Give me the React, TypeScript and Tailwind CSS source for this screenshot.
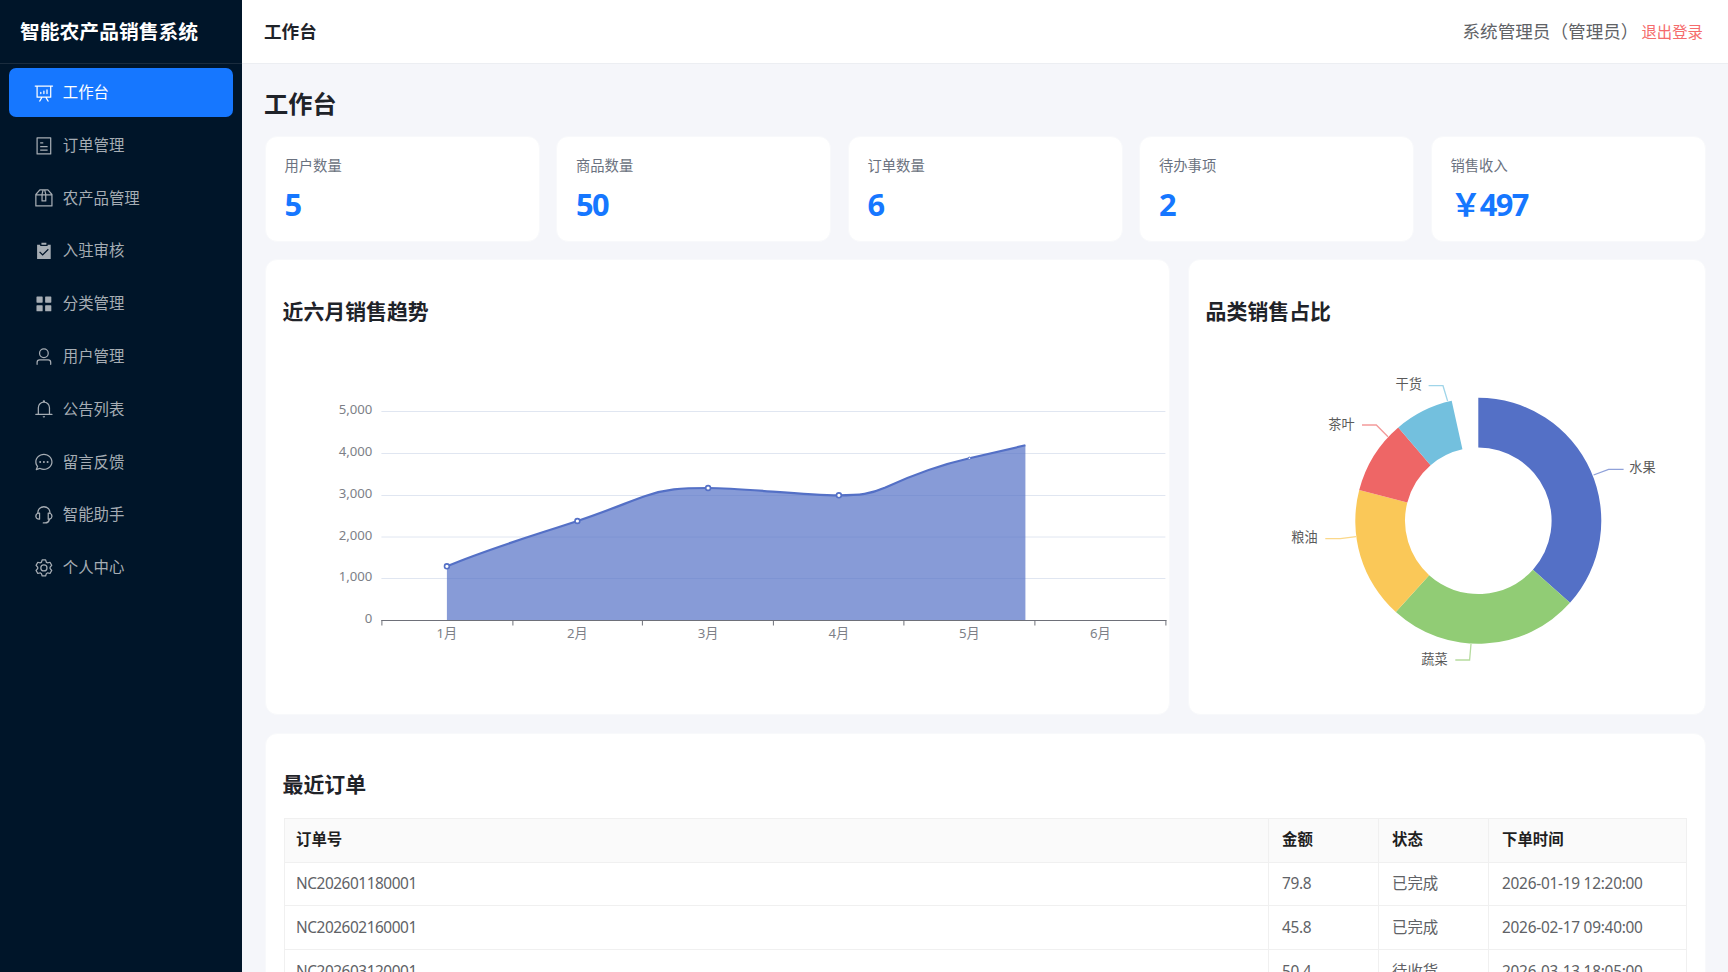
const icons: Record<string, string> = {
  board:
    "m665.216 768 110.848 192h-73.856L591.36 768H433.024L322.176 960H248.32l110.848-192H160a32 32 0 0 1-32-32V192H64a32 32 0 0 1 0-64h896a32 32 0 1 1 0 64h-64v544a32 32 0 0 1-32 32H665.216zM832 192H192v512h640V192zM352 448a32 32 0 0 1 32 32v64a32 32 0 0 1-64 0v-64a32 32 0 0 1 32-32zm160-64a32 32 0 0 1 32 32v128a32 32 0 0 1-64 0V416a32 32 0 0 1 32-32zm160-64a32 32 0 0 1 32 32v192a32 32 0 1 1-64 0V352a32 32 0 0 1 32-32z",
  tickets:
    "M192 128v768h640V128H192zm-32-64h704a32 32 0 0 1 32 32v832a32 32 0 0 1-32 32H160a32 32 0 0 1-32-32V96a32 32 0 0 1 32-32zm160 448h384v64H320v-64zm0-192h160v64H320v-64zm0 384h384v64H320v-64z",
  box: "M317.056 128 128 344.064V896h768V344.064L706.944 128H317.056zm-14.528-64h418.944a32 32 0 0 1 24.064 10.88l206.528 236.096A32 32 0 0 1 960 332.032V928a32 32 0 0 1-32 32H96a32 32 0 0 1-32-32V332.032a32 32 0 0 1 7.936-21.12L278.4 75.008A32 32 0 0 1 302.528 64zM64 320h896v64H64zM448 327.872V640h128V327.872L526.08 128h-28.16L448 327.872zM448 64h128l64 256v352a32 32 0 0 1-32 32H416a32 32 0 0 1-32-32V320l64-256z",
  checked:
    "M704 192h160v736H160V192h160.064v64H704v-64zM311.616 537.28l-45.312 45.248L447.36 763.52l316.8-316.8-45.248-45.184L447.36 673.024 311.616 537.28zM384 192V96h256v96H384z",
  menu: "M160 448a32 32 0 0 1-32-32V160.064a32 32 0 0 1 32-32h256a32 32 0 0 1 32 32V416a32 32 0 0 1-32 32H160zm448 0a32 32 0 0 1-32-32V160.064a32 32 0 0 1 32-32h255.936a32 32 0 0 1 32 32V416a32 32 0 0 1-32 32H608zM160 896a32 32 0 0 1-32-32V608a32 32 0 0 1 32-32h256a32 32 0 0 1 32 32v256a32 32 0 0 1-32 32H160zm448 0a32 32 0 0 1-32-32V608a32 32 0 0 1 32-32h255.936a32 32 0 0 1 32 32v256a32 32 0 0 1-32 32H608z",
  user: "M512 512a192 192 0 1 0 0-384 192 192 0 0 0 0 384zm0 64a256 256 0 1 1 0-512 256 256 0 0 1 0 512zm320 320v-96a96 96 0 0 0-96-96H288a96 96 0 0 0-96 96v96a32 32 0 1 1-64 0v-96a160 160 0 0 1 160-160h448a160 160 0 0 1 160 160v96a32 32 0 1 1-64 0z",
  bell: "M512 64a64 64 0 0 1 64 64v64H448v-64a64 64 0 0 1 64-64zM256 768h512V448a256 256 0 1 0-512 0v320zm256-640a320 320 0 0 1 320 320v384H192V448a320 320 0 0 1 320-320zM96 768h832q32 0 32 32t-32 32H96q-32 0-32-32t32-32zm352 128h128a64 64 0 0 1-128 0z",
  chat: "m174.72 855.68 135.296-45.12 23.68 11.84C388.096 849.536 448.576 864 512 864c211.84 0 384-166.784 384-352S723.84 160 512 160 128 326.784 128 512c0 69.12 24.96 139.264 70.848 199.232l22.08 28.8-46.272 115.584zm-45.248 82.56A32 32 0 0 1 89.6 896l58.368-145.92C94.72 680.32 64 596.864 64 512 64 299.904 256 96 512 96s448 203.904 448 416-192 416-448 416a461.056 461.056 0 0 1-206.912-48.384l-175.616 58.56zM512 563.2a51.2 51.2 0 1 1 0-102.4 51.2 51.2 0 0 1 0 102.4zm192 0a51.2 51.2 0 1 1 0-102.4 51.2 51.2 0 0 1 0 102.4zm-384 0a51.2 51.2 0 1 1 0-102.4 51.2 51.2 0 0 1 0 102.4z",
  service:
    "M864 409.6a192 192 0 0 1-37.888 349.44A256.064 256.064 0 0 1 576 960h-96a32 32 0 1 1 0-64h96a192.064 192.064 0 0 0 181.12-128H736a32 32 0 0 1-32-32V416a32 32 0 0 1 32-32h32c10.368 0 20.544.832 30.528 2.432a288 288 0 0 0-573.056 0A193.235 193.235 0 0 1 256 384h32a32 32 0 0 1 32 32v320a32 32 0 0 1-32 32h-32a192 192 0 0 1-96-358.4 352 352 0 0 1 704 0zM256 448a128 128 0 1 0 0 256V448zm640 128a128 128 0 0 0-128-128v256a128 128 0 0 0 128-128z",
  setting:
    "M600.704 64a32 32 0 0 1 30.464 22.208l35.2 109.376c14.784 7.232 28.928 15.36 42.432 24.512l112.384-24.192a32 32 0 0 1 34.432 15.36L944.32 364.8a32 32 0 0 1-4.032 37.504l-77.12 85.12a357.12 357.12 0 0 1 0 49.024l77.12 85.248a32 32 0 0 1 4.032 37.504l-88.704 153.6a32 32 0 0 1-34.432 15.296L708.8 803.904c-13.44 9.088-27.648 17.28-42.368 24.512l-35.264 109.376A32 32 0 0 1 600.704 960H423.296a32 32 0 0 1-30.464-22.208L357.696 828.48a351.616 351.616 0 0 1-42.56-24.64l-112.32 24.256a32 32 0 0 1-34.432-15.36L79.68 659.2a32 32 0 0 1 4.032-37.504l77.12-85.248a357.12 357.12 0 0 1 0-48.896l-77.12-85.248A32 32 0 0 1 79.68 364.8l88.704-153.6a32 32 0 0 1 34.432-15.296l112.32 24.256c13.568-9.152 27.776-17.408 42.56-24.64l35.2-109.312A32 32 0 0 1 423.232 64H600.64zm-23.424 64H446.72l-36.352 113.088-24.512 11.968a294.113 294.113 0 0 0-34.816 20.096l-22.656 15.36-116.224-25.088-65.28 113.152 79.68 88.192-1.92 27.136a293.12 293.12 0 0 0 0 40.192l1.92 27.136-79.808 88.192 65.344 113.152 116.224-25.024 22.656 15.296a294.113 294.113 0 0 0 34.816 20.096l24.512 11.968L446.72 896h130.688l36.48-113.152 24.448-11.904a288.282 288.282 0 0 0 34.752-20.096l22.592-15.296 116.288 25.024 65.28-113.152-79.744-88.192 1.92-27.136a293.12 293.12 0 0 0 0-40.256l-1.92-27.136 79.808-88.128-65.344-113.152-116.288 24.96-22.592-15.232a287.616 287.616 0 0 0-34.752-20.096l-24.448-11.904L577.344 128zM512 320a192 192 0 1 1 0 384 192 192 0 0 1 0-384zm0 64a128 128 0 1 0 0 256 128 128 0 0 0 0-256z",
};

const menu = [
  { icon: "board", label: "工作台", active: true },
  { icon: "tickets", label: "订单管理" },
  { icon: "box", label: "农产品管理" },
  { icon: "checked", label: "入驻审核" },
  { icon: "menu", label: "分类管理" },
  { icon: "user", label: "用户管理" },
  { icon: "bell", label: "公告列表" },
  { icon: "chat", label: "留言反馈" },
  { icon: "service", label: "智能助手" },
  { icon: "setting", label: "个人中心" },
];

const stats = [
  { label: "用户数量", value: "5" },
  { label: "商品数量", value: "50" },
  { label: "订单数量", value: "6" },
  { label: "待办事项", value: "2" },
  { label: "销售收入", value: "￥497" },
];

const orders = [
  ["NC202601180001", "79.8", "已完成", "2026-01-19 12:20:00"],
  ["NC202602160001", "45.8", "已完成", "2026-02-17 09:40:00"],
  ["NC202603120001", "50.4", "待收货", "2026-03-13 18:05:00"],
];

const TrendChart = () => {
  const grid = [
    { y: 411.5, label: "5,000" },
    { y: 453.5, label: "4,000" },
    { y: 495.5, label: "3,000" },
    { y: 537, label: "2,000" },
    { y: 578.5, label: "1,000" },
    { y: 620.5, label: "0" },
  ];
  const ticks = [381.5, 512.5, 642, 773, 903.5, 1034.5, 1165.5];
  const months = [
    { x: 446.5, label: "1月" },
    { x: 577, label: "2月" },
    { x: 707.7, label: "3月" },
    { x: 838.5, label: "4月" },
    { x: 969, label: "5月" },
    { x: 1100, label: "6月" },
  ];
  const line =
    "M446.5 566.3 C490 548 535 535 577 521 C610 510 630 501 645 496 C665 489 680 488 708 488 C745 488 800 495.3 838 495.3 C860 495.3 870 494 885 487.5 C910 476 935 466 969 458.3 L1025 445.3";

  return (
    <svg className="w-[884px] h-[360px]" viewBox="283.6 340 884 360">
      {grid.slice(0, 5).map((g) => (
        <line key={g.y} x1={381} x2={1165} y1={g.y} y2={g.y} stroke="#e0e6f1" />
      ))}
      {grid.map((g) => (
        <text key={g.label} x={372} y={g.y + 2.5} textAnchor="end" fontSize={13.2} fill="#7d7f87">
          {g.label}
        </text>
      ))}
      <path d={`${line} L1025 620 L446.5 620 Z`} fill="#5470c6" fillOpacity={0.7} />
      <path d={line} fill="none" stroke="#5470c6" strokeWidth={2.2} />
      <line x1={381} x2={1166} y1={620.5} y2={620.5} stroke="#6e7079" />
      {ticks.map((x) => (
        <line key={x} x1={x} x2={x} y1={620} y2={625.5} stroke="#6e7079" />
      ))}
      {months.map((m) => (
        <text key={m.label} x={m.x} y={638} textAnchor="middle" fontSize={13.2} fill="#7d7f87">
          {m.label}
        </text>
      ))}
      {[
        [446.5, 566.3],
        [577, 521],
        [707.7, 488],
        [838.5, 495.3],
      ].map(([x, y]) => (
        <circle key={x} cx={x} cy={y} r={2.4} fill="#fff" stroke="#5470c6" strokeWidth={1.6} />
      ))}
      <circle cx={969} cy={458.3} r={1.2} fill="#fff" stroke="#5470c6" />
    </svg>
  );
};

const CategoryChart = () => {
  const cx = 1478;
  const cy = 520.8;
  const outer = 123;
  const inner = 73.3;
  const point = (r: number, deg: number) => {
    const rad = (deg * Math.PI) / 180;
    return `${(cx + r * Math.sin(rad)).toFixed(2)} ${(cy - r * Math.cos(rad)).toFixed(2)}`;
  };
  const slices = [
    { from: 0, to: 131.8, color: "#5470c6" },
    { from: 131.8, to: 222.1, color: "#91cc75" },
    { from: 222.1, to: 284.5, color: "#fac858" },
    { from: 284.5, to: 319.4, color: "#ee6666" },
    { from: 319.4, to: 347.5, color: "#73c0de" },
  ];
  const labels = [
    { text: "水果", x: 1629, y: 472, line: "1593.3,475 1608.3,469.3 1623.3,469.3", color: "#8fa1d9" },
    { text: "蔬菜", x: 1421, y: 664, line: "1470.7,644 1469.3,660 1455,660", color: "#b6dc9f" },
    { text: "粮油", x: 1291, y: 541.5, line: "1355.7,536.7 1340,538.7 1325,538.7", color: "#fbd88a" },
    { text: "茶叶", x: 1328, y: 428.5, line: "1387.7,436.7 1376,425 1361.7,425", color: "#f39a9a" },
    { text: "干货", x: 1395.3, y: 388.5, line: "1447.3,401 1442.7,385.7 1428.3,385.7", color: "#a0d5e9" },
  ];

  return (
    <svg className="w-[480px] h-[360px]" viewBox="1206.7 340 480 360">
      {slices.map((s) => (
        <path
          key={s.color}
          d={`M${point(outer, s.from)} A${outer} ${outer} 0 0 1 ${point(outer, s.to)} L${point(inner, s.to)} A${inner} ${inner} 0 0 0 ${point(inner, s.from)} Z`}
          fill={s.color}
        />
      ))}
      {labels.map((l) => (
        <g key={l.text}>
          <polyline points={l.line} fill="none" stroke={l.color} strokeWidth={1.3} />
          <text x={l.x} y={l.y} fontSize={13.2} fill="#5a5a5a">
            {l.text}
          </text>
        </g>
      ))}
    </svg>
  );
};

export default function App() {
  return (
    <div className="flex h-screen overflow-hidden bg-[#f5f6fa] font-['Noto_Sans','Noto_Sans_CJK_SC',sans-serif]">
      {/* Sidebar */}
      <aside className="w-[242px] shrink-0 bg-[#001529]">
        <div className="h-[64px] border-b border-[#1a2c3e] pl-[20px] flex items-center text-[19.8px] font-bold text-white">
          智能农产品销售系统
        </div>
        <nav className="mt-[4px] px-[9px]">
          {menu.map((item) => (
            <div
              key={item.label}
              className={`h-[49.4px] mb-[3.4px] pl-[25px] flex items-center gap-[9px] rounded-[7px] text-[15.4px] ${
                item.active ? "bg-[#1677ff] text-white" : "text-[#a6adb4]"
              }`}
            >
              <svg className="w-[19.8px] h-[19.8px] fill-current shrink-0" viewBox="0 0 1024 1024">
                <path d={icons[item.icon]} />
              </svg>
              {item.label}
            </div>
          ))}
        </nav>
      </aside>

      <div className="flex-1 min-w-0 flex flex-col">
        {/* Top bar */}
        <header className="h-[64px] shrink-0 bg-white border-b border-[#eceef2] pl-[22px] pr-[25px] flex items-center justify-between">
          <div className="text-[17.6px] font-bold text-[#1f2329]">工作台</div>
          <div className="flex items-center gap-[3px]">
            <span className="text-[17.6px] text-[#606266]">系统管理员（管理员）</span>
            <span className="text-[15.4px] text-[#f56c6c] mt-[3px]">退出登录</span>
          </div>
        </header>

        <main className="flex-1 overflow-hidden px-[22.5px] pt-[22px]">
          <h1 className="text-[24.2px] leading-[36px] font-bold text-[#1f2329] mb-[14px] -ml-[0.5px]">工作台</h1>

          {/* Stat cards */}
          <div className="grid grid-cols-5 gap-[16.5px] mb-[17px]">
            {stats.map((s) => (
              <div key={s.label} className="h-[106px] bg-white border border-[#f8f9fb] rounded-[12px] px-[19px] pt-[19px]">
                <div className="text-[14.3px] leading-[20px] text-[#6b7280]">{s.label}</div>
                <div className="mt-[10px] text-[30.8px] leading-[36px] font-bold tracking-[-1.6px] text-[#1677ff]">{s.value}</div>
              </div>
            ))}
          </div>

          {/* Charts */}
          <div className="grid grid-cols-[905.5px_1fr] gap-[17.6px] mb-[17.6px]">
            <div className="h-[456px] bg-white border border-[#f8f9fb] rounded-[12px] px-[18px] pt-[36px]">
              <h3 className="text-[20.9px] leading-[30px] font-bold text-[#1f2329] mb-[14px] -ml-[1px]">近六月销售趋势</h3>
              <TrendChart />
            </div>
            <div className="h-[456px] bg-white border border-[#f8f9fb] rounded-[12px] px-[18px] pt-[36px]">
              <h3 className="text-[20.9px] leading-[30px] font-bold text-[#1f2329] mb-[14px] -ml-[1px]">品类销售占比</h3>
              <CategoryChart />
            </div>
          </div>

          {/* Recent orders */}
          <div className="bg-white border border-[#f8f9fb] rounded-[12px] px-[18px] pt-[35px] pb-[20px]">
            <h3 className="text-[20.9px] leading-[30px] font-bold text-[#1f2329] mb-[19px] -ml-[1px]">最近订单</h3>
            <table className="w-full table-fixed border-collapse text-[15.4px] text-left">
              <colgroup>
                <col />
                <col className="w-[110px]" />
                <col className="w-[110px]" />
                <col className="w-[198px]" />
              </colgroup>
              <thead>
                <tr className="h-[44px] bg-[#fafafa] text-[#1f1f1f]">
                  {["订单号", "金额", "状态", "下单时间"].map((h, i) => (
                    <th key={h} className={`border border-[#f0f0f0] pr-[12px] pb-[2px] font-bold ${i === 0 ? "pl-[11.5px]" : "pl-[13.5px]"}`}>
                      {h}
                    </th>
                  ))}
                </tr>
              </thead>
              <tbody>
                {orders.map((row) => (
                  <tr key={row[0]} className="h-[43.6px] text-[#606266]">
                    <td className="border border-[#f0f0f0] pl-[11.5px] pr-[12px] tracking-[-0.45px]">{row[0]}</td>
                    <td className="border border-[#f0f0f0] pl-[13.5px] pr-[12px] tracking-[-0.35px]">{row[1]}</td>
                    <td className="border border-[#f0f0f0] pl-[13.5px] pr-[12px]">{row[2]}</td>
                    <td className="border border-[#f0f0f0] pl-[13.5px] pr-[12px] tracking-[-0.25px]">{row[3]}</td>
                  </tr>
                ))}
              </tbody>
            </table>
          </div>
        </main>
      </div>
    </div>
  );
}
